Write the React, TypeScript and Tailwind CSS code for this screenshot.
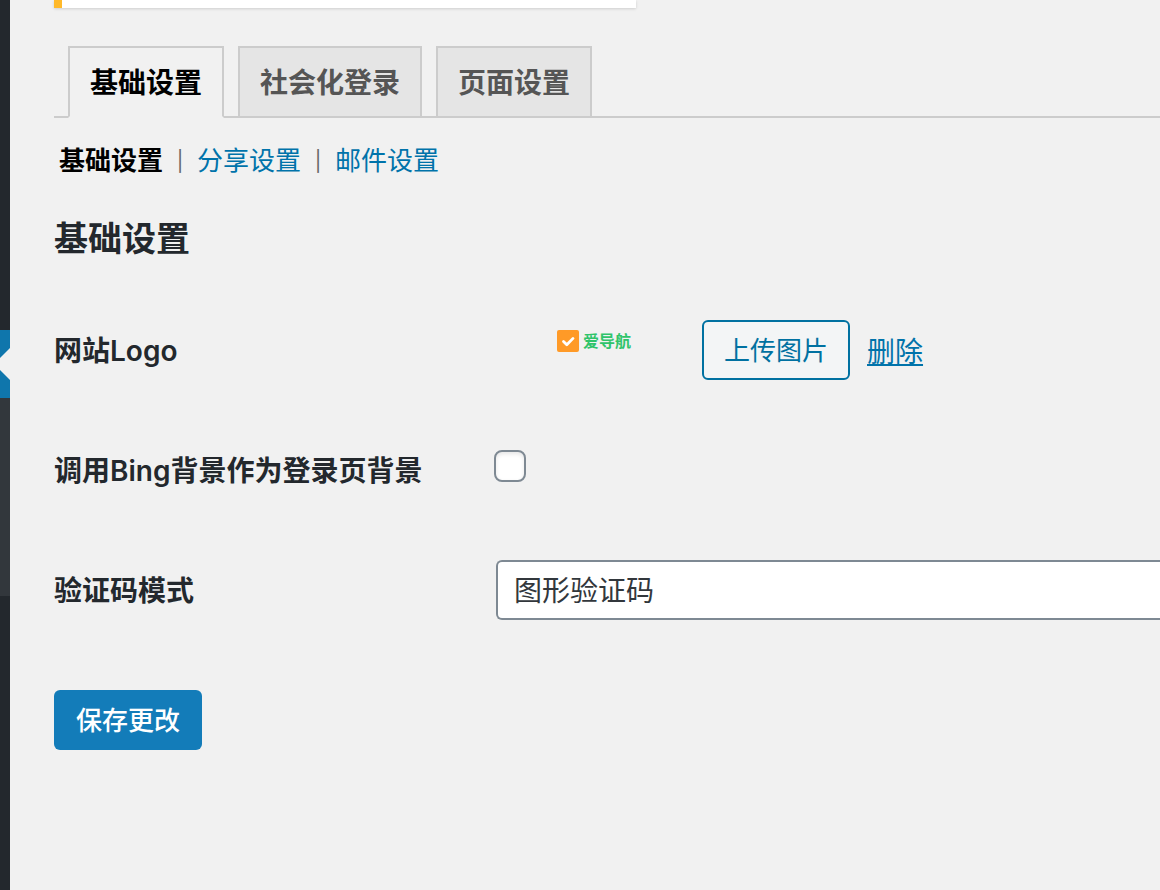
import { useState } from 'react'

const TABS = ['基础设置', '社会化登录', '页面设置']
const SECTIONS = ['基础设置', '分享设置', '邮件设置']

export default function App() {
  const [tab, setTab] = useState(TABS[0])
  const [section, setSection] = useState(SECTIONS[0])

  return (
    <div className="flex min-h-screen overflow-hidden bg-[#f1f1f1] font-[Inter,'Noto_Sans_CJK_SC',sans-serif] text-[#23282d]">
      <AdminMenu />

      <main className="min-w-0 flex-1 pl-11">
        <div className="h-2 max-w-[582px] border-l-8 border-[#ffb92a] bg-white shadow-[0_1px_3px_rgba(0,0,0,0.15)]" />

        <nav className="mt-[38px] flex gap-3.5 border-b-2 border-[#ccc] pl-3.5">
          {TABS.map((name) => (
            <Tab key={name} active={tab === name} onClick={() => setTab(name)}>
              {name}
            </Tab>
          ))}
        </nav>

        <ul className="mt-[25px] flex pl-[5px] text-[26px] leading-9">
          {SECTIONS.map((name, i) => (
            <li key={name} className="flex">
              {i > 0 && <span className="w-[34px] text-center text-xl leading-9 text-[#666]">|</span>}
              <a
                href="#"
                onClick={() => setSection(name)}
                className={section === name ? 'font-semibold text-black' : 'text-[#0073aa]'}
              >
                {name}
              </a>
            </li>
          ))}
        </ul>

        <form onSubmit={(e) => e.preventDefault()}>
          <h2 className="mt-9 text-[34px] leading-12 font-semibold">{section}</h2>

          <div className="mt-[27px]">
            <Row id="logo" label="网站Logo">
              <div className="flex w-[208px] justify-end pr-[71px] pb-[18px]">
                <SiteLogo />
              </div>
              <button
                id="logo"
                type="button"
                className="h-[60px] rounded-md border-2 border-[#0071a1] bg-[#f3f5f6] px-5 text-[26px] text-[#0071a1]"
              >
                上传图片
              </button>
              <a href="#" className="ml-[17px] pt-1 text-[28px] text-[#0073aa] underline">
                删除
              </a>
            </Row>

            <Row id="bing" label="调用Bing背景作为登录页背景">
              <input
                id="bing"
                type="checkbox"
                className="mb-2 size-8 appearance-none rounded-lg border-2 border-[#7e8993] bg-white shadow-[inset_0_2px_4px_rgba(0,0,0,0.1)] checked:bg-[#0071a1]"
              />
            </Row>

            <Row id="captcha" label="验证码模式">
              <select
                id="captcha"
                className="ml-0.5 h-[60px] flex-1 appearance-none rounded-l-md border-2 border-r-0 border-[#7e8993] bg-white pt-0.5 pl-4 text-[28px] text-[#32373c]"
              >
                <option>图形验证码</option>
              </select>
            </Row>
          </div>

          <button
            type="submit"
            className="mt-10 h-[60px] rounded-md bg-[#137cb9] px-[22px] text-[26px] font-medium text-white"
          >
            保存更改
          </button>
        </form>
      </main>
    </div>
  )
}

function AdminMenu() {
  return (
    <aside className="flex w-2.5 shrink-0 flex-col bg-[#23282d]">
      <div className="h-[330px]" />
      <div className="h-[68px] bg-[#0f76ac]">
        <svg viewBox="0 0 10 68" className="h-full w-full" fill="#f1f1f1">
          <path d="M10 18 L0 28 V40 L10 50 Z" />
        </svg>
      </div>
      <div className="h-[198px] bg-[#32373c]" />
    </aside>
  )
}

function Tab({
  active,
  onClick,
  children,
}: {
  active: boolean
  onClick: () => void
  children: React.ReactNode
}) {
  return (
    <button
      type="button"
      onClick={onClick}
      className={`-mb-0.5 border-2 border-[#ccc] px-5 pt-[11px] pb-[9px] text-[28px] leading-12 font-semibold ${
        active ? 'border-b-[#f1f1f1] bg-[#f1f1f1] text-black' : 'bg-[#e5e5e5] text-[#555]'
      }`}
    >
      {children}
    </button>
  )
}

function Row({ id, label, children }: { id: string; label: string; children: React.ReactNode }) {
  return (
    <div className="flex h-[120px] items-center">
      <label htmlFor={id} className="w-[440px] shrink-0 pt-0.5 text-[28px] font-semibold">
        {label}
      </label>
      {children}
    </div>
  )
}

function SiteLogo() {
  return (
    <div className="flex items-center gap-1 text-base font-bold whitespace-nowrap text-[#2fc46a]">
      <svg viewBox="0 0 22 22" className="size-[22px]">
        <rect width="22" height="22" rx="2" fill="#ff9a27" />
        <path
          d="M6.5 11.5 L9.8 14.8 L16 8.4"
          fill="none"
          stroke="#fff"
          strokeWidth="2.8"
          strokeLinecap="round"
          strokeLinejoin="round"
        />
      </svg>
      爱导航
    </div>
  )
}
